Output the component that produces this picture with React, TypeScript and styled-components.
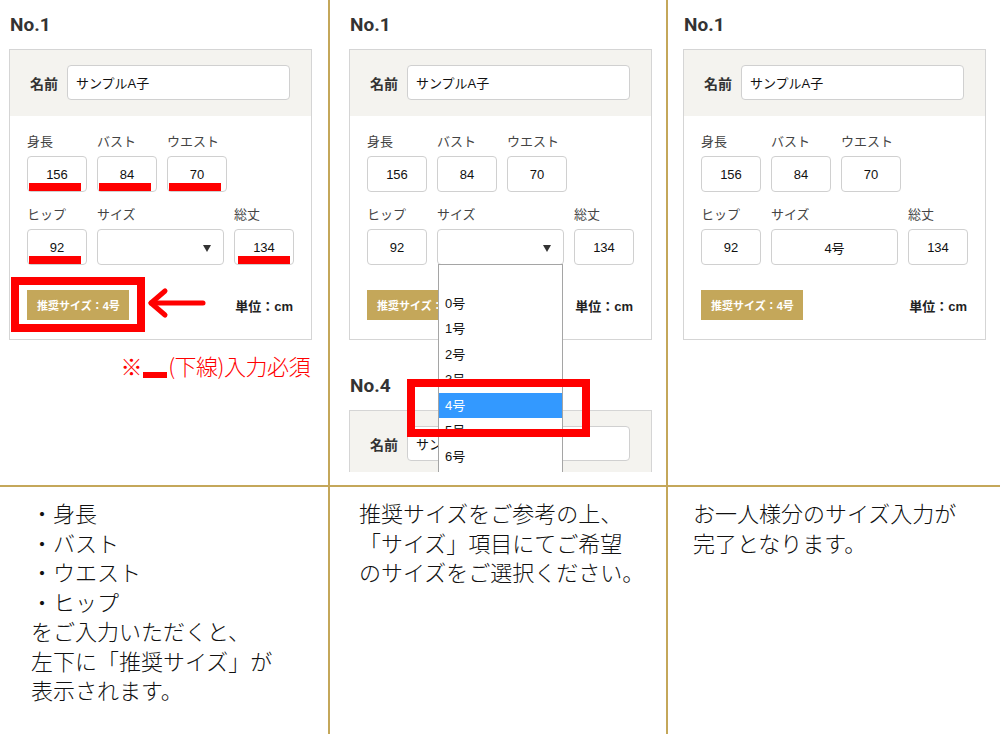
import React from 'react'
import styled, { createGlobalStyle } from 'styled-components'

const gold = '#c4a75a'
const ui = `"Liberation Sans", "Noto Sans CJK JP", sans-serif`

const GlobalStyle = createGlobalStyle`
  html, body { margin: 0; padding: 0; background: #fff; }
  body { font-family: ${ui}; color: #222; }
  * { box-sizing: border-box; }
`

const Page = styled.div`
  display: flex;
  width: 1000px;
  height: 734px;
  overflow: hidden;
`

const Column = styled.div<{ $w: number; $divider?: boolean }>`
  width: ${(p) => p.$w}px;
  flex: none;
  display: flex;
  flex-direction: column;
  border-right: ${(p) => (p.$divider ? `2px solid ${gold}` : 'none')};
`

const TopArea = styled.div<{ $pl: number }>`
  position: relative;
  height: 472px;
  margin-bottom: 13px;
  padding-left: ${(p) => p.$pl}px;
  overflow: hidden;
`

const Heading = styled.div<{ $mt: number }>`
  font-family: Roboto, "Liberation Sans", sans-serif;
  font-weight: 700;
  font-size: 19px;
  line-height: 22px;
  color: #333;
  margin: ${(p) => p.$mt}px 0 13px 1px;
`

const Panel = styled.div`
  width: 303px;
  border: 1px solid #d5d5d5;
  background: #fff;
`

const PanelHead = styled.div`
  display: flex;
  align-items: center;
  gap: 9px;
  padding: 15px 20px 16px;
  background: #f4f3ef;
`

const NameLabel = styled.span`
  font-weight: 700;
  font-size: 14px;
  color: #333;
  width: 28px;
  white-space: nowrap;
`

const NameInput = styled.div`
  width: 223px;
  height: 35px;
  border: 1px solid #d0d0d0;
  border-radius: 4px;
  background: #fff;
  display: flex;
  align-items: center;
  padding-left: 8px;
  font-size: 13px;
  color: #111;
  white-space: nowrap;
  overflow: hidden;
`

const PanelBody = styled.div`
  padding: 17px 17px 19px;
`

const FieldRow = styled.div<{ $cols: string; $mb?: number }>`
  display: grid;
  grid-template-columns: ${(p) => p.$cols};
  column-gap: 10px;
  margin-bottom: ${(p) => p.$mb ?? 0}px;
`

const Field = styled.div`
  position: relative;
`

const FieldLabel = styled.div`
  font-size: 13px;
  line-height: 18px;
  color: #444;
  margin-bottom: 5px;
  white-space: nowrap;
`

const ValueBox = styled.div`
  position: relative;
  height: 36px;
  border: 1px solid #d0d0d0;
  border-radius: 4px;
  background: #fff;
  display: flex;
  align-items: center;
  justify-content: center;
  font-size: 13px;
  color: #111;
`

const Underline = styled.span<{ $left?: number }>`
  position: absolute;
  left: ${(p) => p.$left ?? 1}px;
  bottom: 0;
  width: 52px;
  height: 8px;
  background: #ff0000;
`

const SelectArrow = styled.span`
  position: absolute;
  right: 12px;
  top: 15px;
  width: 0;
  height: 0;
  border-left: 4.5px solid transparent;
  border-right: 4.5px solid transparent;
  border-top: 7px solid #333;
`

const PanelFoot = styled.div`
  margin-top: 25px;
  display: flex;
  align-items: center;
  justify-content: space-between;
`

const Recommend = styled.div`
  width: 102px;
  height: 30px;
  padding-left: 10px;
  display: flex;
  align-items: center;
  background: ${gold};
  color: #fff;
  font-weight: 700;
  font-size: 11px;
  white-space: nowrap;
`

const Unit = styled.div`
  font-weight: 700;
  font-size: 13px;
  color: #222;
  padding-right: 1px;
`

const Note = styled.div`
  width: 303px;
  margin-top: 10px;
  padding-right: 2px;
  text-align: right;
  font-family: "Noto Sans CJK JP", sans-serif;
  font-weight: 300;
  font-size: 22px;
  line-height: 30px;
  color: #ff0000;
  white-space: nowrap;
  letter-spacing: -0.5px;
`

const NoteBar = styled.span`
  display: inline-block;
  width: 24px;
  height: 6px;
  margin: 0 1px;
  background: #ff0000;
  vertical-align: -3px;
`

const Marker = styled.div<{ $x: number; $y: number; $w: number; $h: number }>`
  position: absolute;
  left: ${(p) => p.$x}px;
  top: ${(p) => p.$y}px;
  width: ${(p) => p.$w}px;
  height: ${(p) => p.$h}px;
  border: 8px solid #ff0000;
  z-index: 5;
`

const ArrowSvg = styled.svg`
  position: absolute;
  left: 146px;
  top: 287px;
  z-index: 5;
`

const DropList = styled.div`
  position: absolute;
  top: 100%;
  left: 0;
  width: 100%;
  border: 1px solid #a5a5a5;
  background: #fff;
  z-index: 4;
`

const DropItem = styled.div<{ $active?: boolean }>`
  height: 25.5px;
  line-height: 25.5px;
  padding-left: 6px;
  font-size: 13px;
  background: ${(p) => (p.$active ? '#3399ff' : '#fff')};
  color: ${(p) => (p.$active ? '#fff' : '#111')};
`

const Bottom = styled.div<{ $pl: number }>`
  flex: 1;
  border-top: 2px solid ${gold};
  padding: 13px 0 0 ${(p) => p.$pl}px;
  font-family: "Liberation Serif", "Noto Sans CJK JP", serif;
  font-weight: 300;
  font-size: 22px;
  line-height: 29.5px;
  color: #111;
  white-space: nowrap;
`

type SizeCardProps = {
  underline?: boolean
  size?: string
  open?: boolean
}

const SizeCard: React.FC<SizeCardProps> = ({ underline, size, open }) => {
  const sizes = ['', '0号', '1号', '2号', '3号', '4号', '5号', '6号', '7号']
  return (
    <Panel>
      <PanelHead>
        <NameLabel>名前</NameLabel>
        <NameInput>サンプルA子</NameInput>
      </PanelHead>
      <PanelBody>
        <FieldRow $cols="60px 60px 60px" $mb={14}>
          <Field>
            <FieldLabel>身長</FieldLabel>
            <ValueBox>156{underline && <Underline />}</ValueBox>
          </Field>
          <Field>
            <FieldLabel>バスト</FieldLabel>
            <ValueBox>84{underline && <Underline />}</ValueBox>
          </Field>
          <Field>
            <FieldLabel>ウエスト</FieldLabel>
            <ValueBox>70{underline && <Underline />}</ValueBox>
          </Field>
        </FieldRow>
        <FieldRow $cols="60px 127px 60px">
          <Field>
            <FieldLabel>ヒップ</FieldLabel>
            <ValueBox>92{underline && <Underline />}</ValueBox>
          </Field>
          <Field>
            <FieldLabel>サイズ</FieldLabel>
            <ValueBox>
              {size ?? <SelectArrow />}
              {open && (
                <DropList>
                  {sizes.map((s, i) => (
                    <DropItem key={i} $active={s === '4号'}>
                      {s}
                    </DropItem>
                  ))}
                </DropList>
              )}
            </ValueBox>
          </Field>
          <Field>
            <FieldLabel>総丈</FieldLabel>
            <ValueBox>134{underline && <Underline $left={3} />}</ValueBox>
          </Field>
        </FieldRow>
        <PanelFoot>
          <Recommend>推奨サイズ：4号</Recommend>
          <Unit>単位：cm</Unit>
        </PanelFoot>
      </PanelBody>
    </Panel>
  )
}

const App: React.FC = () => {
  return (
    <>
      <GlobalStyle />
      <Page>
        <Column $w={330} $divider>
          <TopArea $pl={9}>
            <Heading $mt={14}>No.1</Heading>
            <SizeCard underline />
            <Note>
              ※<NoteBar />(下線)入力必須
            </Note>
            <Marker $x={11} $y={277} $w={134} $h={55} />
            <ArrowSvg width="62" height="32" viewBox="0 0 62 32">
              <g fill="none" stroke="#ff0000" strokeWidth="5" strokeLinecap="round" strokeLinejoin="round">
                <path d="M5 16 H57" />
                <path d="M19 4 L5 16 L19 28" />
              </g>
            </ArrowSvg>
          </TopArea>
          <Bottom $pl={31}>
            ・身長
            <br />
            ・バスト
            <br />
            ・ウエスト
            <br />
            ・ヒップ
            <br />
            をご入力いただくと、
            <br />
            左下に「推奨サイズ」が
            <br />
            表示されます。
          </Bottom>
        </Column>
        <Column $w={338} $divider>
          <TopArea $pl={19}>
            <Heading $mt={14}>No.1</Heading>
            <SizeCard open />
            <Heading $mt={35}>No.4</Heading>
            <SizeCard />
            <Marker $x={77} $y={379} $w={183} $h={58} />
          </TopArea>
          <Bottom $pl={29}>
            推奨サイズをご参考の上、
            <br />
            「サイズ」項目にてご希望
            <br />
            のサイズをご選択ください。
          </Bottom>
        </Column>
        <Column $w={332}>
          <TopArea $pl={15}>
            <Heading $mt={14}>No.1</Heading>
            <SizeCard size="4号" />
          </TopArea>
          <Bottom $pl={25}>
            お一人様分のサイズ入力が
            <br />
            完了となります。
          </Bottom>
        </Column>
      </Page>
    </>
  )
}

export default App
